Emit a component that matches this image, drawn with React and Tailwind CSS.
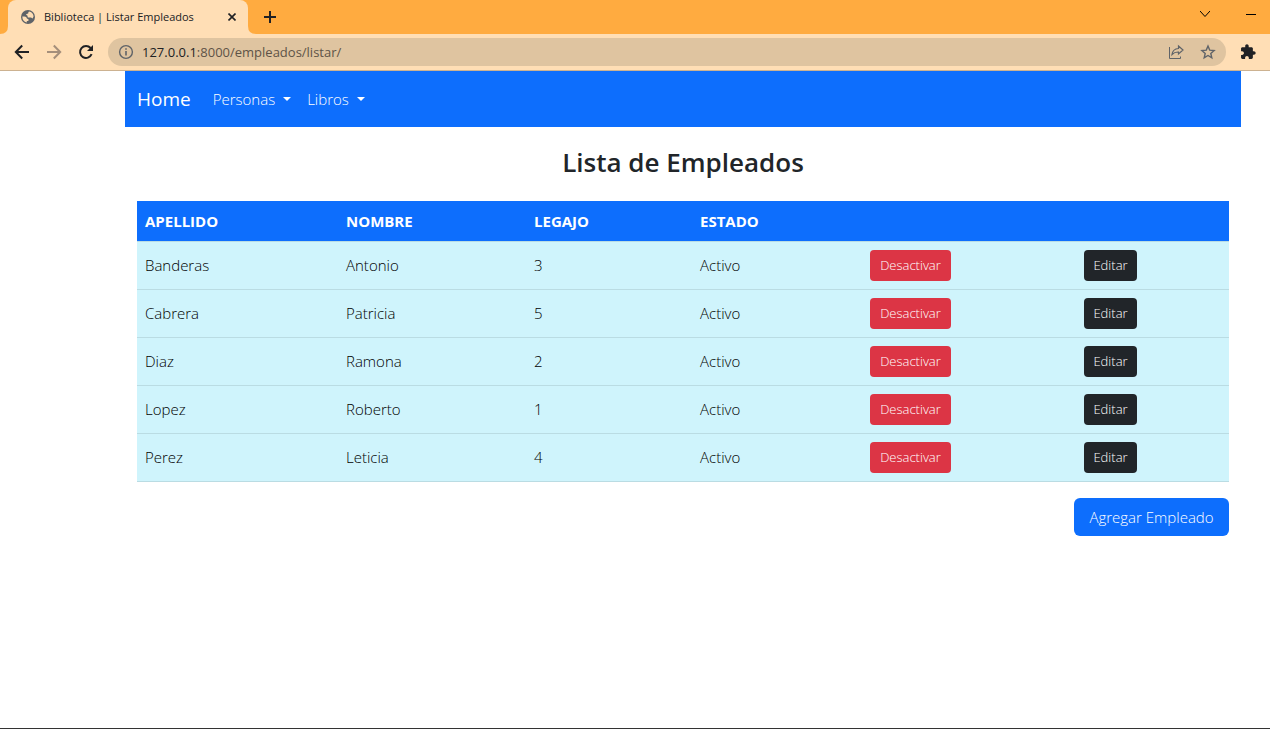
import React from "react";

const employees = [
  ["Banderas", "Antonio", 3],
  ["Cabrera", "Patricia", 5],
  ["Diaz", "Ramona", 2],
  ["Lopez", "Roberto", 1],
  ["Perez", "Leticia", 4],
];

function GlobeIcon() {
  return (
    <svg className="h-4 w-4" viewBox="0 0 16 16" aria-hidden="true">
      <circle cx="8" cy="8" r="7" fill="#5f6368" />
      <path
        d="M2.3 7.4H4.4Q6.8 7.6 6.8 9.2 6.8 10 8.4 10V12H6.8V13.5Q2.4 12.4 2.3 7.4ZM9 2.4Q13 3.200 13.600 7.200L12.600 9.600 11 8.600H8.800Q7.600 8.600 7.600 7.400 7.600 6 6 6 6 4.400 8.200 4.400 8.200 3 9 2.400Z"
        fill="#ffdeb5"
      />
    </svg>
  );
}

function Caret() {
  return (
    <svg className="h-1 w-2" viewBox="0 0 8 4" aria-hidden="true">
      <path d="M0 0H8L4 4Z" fill="currentColor" />
    </svg>
  );
}

function BrowserChrome() {
  return (
    <header className="text-[#202124]">
      <div className="flex h-[34px] items-stretch bg-[#ffab40]">
        <svg className="h-2 w-2 shrink-0 self-end" viewBox="0 0 8 8" aria-hidden="true">
          <path d="M0 8Q8 8 8 0V8Z" fill="#ffdeb5" />
        </svg>
        <div className="flex w-60 shrink-0 items-center rounded-t-lg bg-[#ffdeb5] pl-3 pr-2">
          <GlobeIcon />
          <span className="ml-2 flex-1 whitespace-nowrap text-[11px] font-normal leading-4">Biblioteca | Listar Empleados</span>
          <button type="button" aria-label="Cerrar" className="flex h-4 w-4 items-center justify-center">
            <svg className="h-2 w-2" viewBox="0 0 8 8" aria-hidden="true">
              <path d="M.5.5 7.5 7.5M7.5.5.5 7.5" stroke="currentColor" strokeWidth="1.6" />
            </svg>
          </button>
        </div>
        <svg className="h-2 w-2 shrink-0 self-end" viewBox="0 0 8 8" aria-hidden="true">
          <path d="M0 0Q0 8 8 8H0Z" fill="#ffdeb5" />
        </svg>
        <button type="button" aria-label="Nueva pestaña" className="flex w-7 items-center justify-center">
          <svg className="h-3 w-3" viewBox="0 0 12 12" aria-hidden="true">
            <path d="M6 0V12M0 6H12" stroke="currentColor" strokeWidth="2" />
          </svg>
        </button>
        <div className="ml-auto flex items-center gap-9 pr-3.5 pb-1.5 text-black">
          <button type="button" aria-label="Buscar pestañas">
            <svg className="block h-2 w-2.5" viewBox="0 0 10 8" aria-hidden="true">
              <path d="M0 1 5 6.5 10 1" fill="none" stroke="currentColor" strokeWidth="1" />
            </svg>
          </button>
          <button type="button" aria-label="Minimizar">
            <svg className="block h-2 w-2.5" viewBox="0 0 10 8" aria-hidden="true">
              <path d="M0 4.5H10" stroke="currentColor" />
            </svg>
          </button>
        </div>
      </div>
      <div className="flex h-[37px] items-center border-b border-[#ccb291] bg-[#ffdeb5] pl-3.5 pr-3.5">
        <div className="flex shrink-0 gap-4">
          <button type="button" aria-label="Atrás">
            <svg className="block h-4 w-4" viewBox="0 0 16 16" aria-hidden="true">
              <path d="M15 8H2.5M8.2 1.5 1.8 8 8.2 14.5" fill="none" stroke="currentColor" strokeWidth="2" />
            </svg>
          </button>
          <button type="button" aria-label="Adelante" className="text-[#a58f7b]">
            <svg className="block h-4 w-4" viewBox="0 0 16 16" aria-hidden="true">
              <path d="M1 8H13.5M7.8 1.5 14.2 8 7.8 14.5" fill="none" stroke="currentColor" strokeWidth="2" />
            </svg>
          </button>
          <button type="button" aria-label="Recargar">
            <svg className="block h-4 w-4" viewBox="0 0 16 16" aria-hidden="true">
              <path d="M13.6 10.2A6 6 0 1 1 12.6 4" fill="none" stroke="currentColor" strokeWidth="2" />
              <path d="M15 1V7H9Z" fill="currentColor" />
            </svg>
          </button>
        </div>
        <div className="ml-3.5 flex h-7 flex-1 items-center rounded-full bg-[#dfc4a0] pl-2.5 pr-2.5 text-[#5f6368]">
          <svg className="h-4 w-4 shrink-0" viewBox="0 0 16 16" aria-hidden="true">
            <circle cx="8" cy="8" r="6.4" fill="none" stroke="currentColor" strokeWidth="1.4" />
            <path d="M8 7V11.5M8 4.2V5.8" stroke="currentColor" strokeWidth="1.6" />
          </svg>
          <span className="ml-2 flex-1 whitespace-nowrap text-[13px] font-normal leading-5 text-[#5e5347]">
            <span className="text-[#202124]">127.0.0.1</span>:8000/empleados/listar/
          </span>
          <button type="button" aria-label="Compartir" className="mr-4">
            <svg className="block h-4 w-4" viewBox="0 0 16 16" aria-hidden="true">
              <path d="M1.5 3V14.500H12.500V12.500" fill="none" stroke="currentColor" />
              <path d="M10.500 2 15 6 10.500 10V8Q6.500 7.800 4 10.500 4.600 5 10.500 4.500Z" fill="none" stroke="currentColor" strokeWidth="1.2" />
            </svg>
          </button>
          <button type="button" aria-label="Favorito">
            <svg className="block h-4 w-4" viewBox="0 0 16 16" aria-hidden="true">
              <path
                d="M8 2 9.7 6.1 14.1 6.5 10.8 9.4 11.8 13.8 8 11.5 4.2 13.8 5.2 9.4 1.9 6.5 6.3 6.1Z"
                fill="none"
                stroke="currentColor"
                strokeWidth="1.4"
              />
            </svg>
          </button>
        </div>
        <button type="button" aria-label="Extensiones" className="ml-3.5">
          <svg className="block h-4 w-4" viewBox="0.5 0.5 23 23" aria-hidden="true">
            <path
              d="M20.5 11H19V7c0-1.100-.9-2-2-2h-4V3.500C13 2.120 11.880 1 10.500 1S8 2.120 8 3.500V5H4c-1.100 0-1.990.9-1.990 2v3.800H3.500c1.490 0 2.700 1.210 2.700 2.700s-1.210 2.700-2.700 2.700H2V20c0 1.100.9 2 2 2h3.800v-1.500c0-1.490 1.210-2.700 2.700-2.700s2.700 1.210 2.700 2.700V22H17c1.100 0 2-.9 2-2v-4h1.500c1.380 0 2.500-1.120 2.500-2.500S21.880 11 20.500 11z"
              fill="currentColor"
            />
          </svg>
        </button>
      </div>
    </header>
  );
}

export default function App() {
  return (
    <div className="flex min-h-screen flex-col border-b border-[#333333] bg-white font-['Open_Sans',sans-serif] font-[350]">
      <BrowserChrome />
      <div className="ml-[125px] mr-[29px] text-[15px] leading-6">
        <nav className="flex h-14 items-center bg-[#0d6efd] px-3 text-white">
          <a href="#home" className="mr-[22px] text-[19px] font-normal leading-8">Home</a>
          <button type="button" className="mr-4 flex items-center gap-2">
            Personas <Caret />
          </button>
          <button type="button" className="flex items-center gap-2">
            Libros <Caret />
          </button>
        </nav>
        <main className="px-3">
          <h1 className="pt-[18px] pb-[22px] text-center text-[26px] font-semibold leading-[34px] text-[#212529]">Lista de Empleados</h1>
          <table className="w-full table-fixed border-collapse text-left text-black">
            <colgroup>
              <col className="w-[201px]" />
              <col className="w-[188px]" />
              <col className="w-[166px]" />
              <col className="w-[170px]" />
              <col className="w-[214px]" />
              <col />
            </colgroup>
            <thead>
              <tr className="h-10 border-b border-[#badce3] bg-[#0d6efd] text-white">
                {["APELLIDO", "NOMBRE", "LEGAJO", "ESTADO"].map((t) => (
                  <th key={t} scope="col" className="px-2 py-0 font-bold">{t}</th>
                ))}
                <td />
                <td />
              </tr>
            </thead>
            <tbody>
              {employees.map(([last, first, id]) => (
                <tr key={id} className="h-12 border-b border-[#badce3] bg-[#cff4fc]">
                  <td className="px-2">{last}</td>
                  <td className="px-2">{first}</td>
                  <td className="px-2">{id}</td>
                  <td className="px-2">Activo</td>
                  <td className="px-2">
                    <button type="button" className="block h-[31px] w-[81px] rounded bg-[#dc3545] text-[13px] text-white">Desactivar</button>
                  </td>
                  <td className="px-2">
                    <button type="button" className="block h-[31px] w-[53px] rounded bg-[#212529] text-[13px] text-white">Editar</button>
                  </td>
                </tr>
              ))}
            </tbody>
          </table>
          <div className="flex justify-end pt-4">
            <a href="#agregar" className="min-w-[155px] rounded-md bg-[#0d6efd] px-3 py-[7px] text-center text-white">Agregar Empleado</a>
          </div>
        </main>
      </div>
    </div>
  );
}
